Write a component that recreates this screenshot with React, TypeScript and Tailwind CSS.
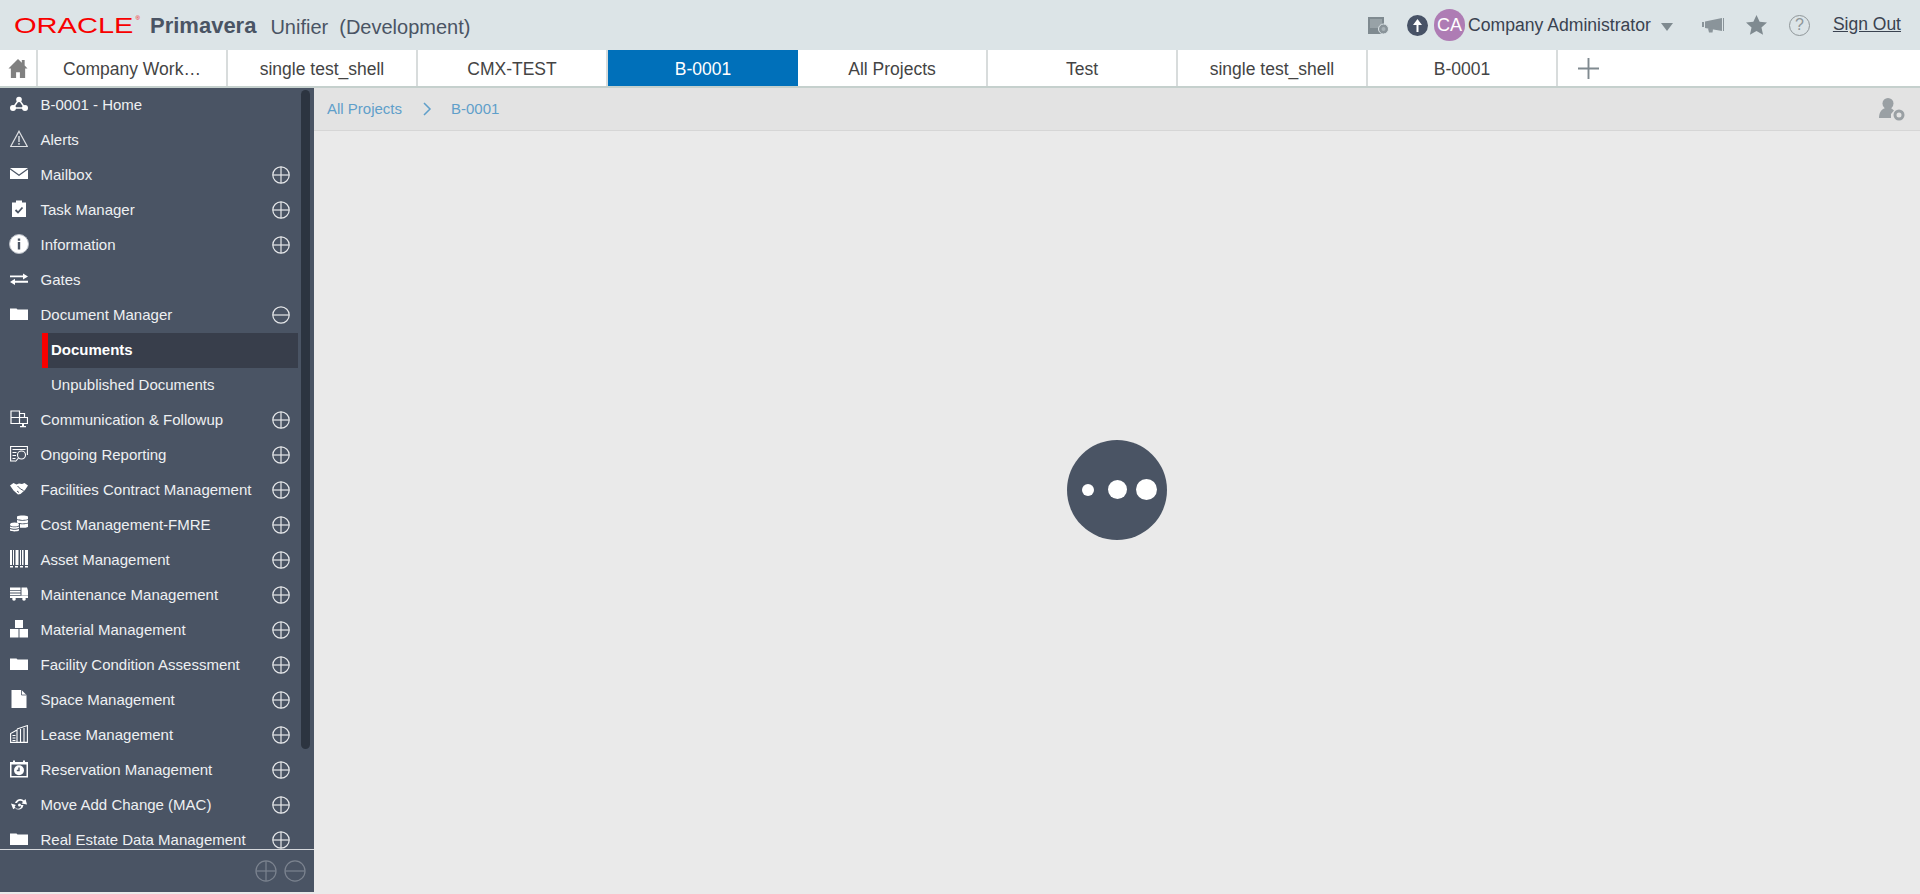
import type { ReactNode } from 'react';

const tabs = ['Company Work…', 'single test_shell', 'CMX-TEST', 'B-0001', 'All Projects', 'Test', 'single test_shell', 'B-0001'];

function Ico({ children, w = 18, h = 18 }: { children: ReactNode; w?: number; h?: number }) {
  return (
    <svg width={w} height={h} viewBox="0 0 18 18" fill="#fff">
      {children}
    </svg>
  );
}

const FolderIcon = (
  <Ico>
    <path d="M0 3.500h6.500l1 1H18V15H0z" />
  </Ico>
);

const icons: Record<string, ReactNode> = {
  home: (
    <Ico>
      <circle cx="9" cy="4.500" r="2.800" />
      <circle cx="3" cy="13" r="3" />
      <circle cx="15" cy="13" r="3" />
      <path d="M9 4.500 3 13h12z" fill="none" stroke="#fff" strokeWidth="1.500" />
    </Ico>
  ),
  alert: (
    <Ico>
      <path d="M9 1.200 17.300 16.500H.7z" fill="none" stroke="#dfe1e4" strokeWidth="1.200" />
      <path d="M8.300 6h1.400v6H8.300zM8.300 13h1.400v1.800H8.300z" fill="#dfe1e4" />
    </Ico>
  ),
  mail: (
    <Ico>
      <path d="M0 3h18L9 9.500z" />
      <path d="M0 4.500V14h18V4.500L9 11z" />
    </Ico>
  ),
  task: (
    <Ico>
      <path d="M2 2.500h4V.5h6v2h4V17H2z" />
      <path d="m5.500 10 2.500 2.500 4.500-5" fill="none" stroke="#4a5464" strokeWidth="1.800" />
    </Ico>
  ),
  info: (
    <svg width="20" height="20" viewBox="0 0 20 20">
      <circle cx="10" cy="10" r="9.500" fill="#fff" stroke="#b8bdc5" />
      <path d="M8.800 4.500h2.400v2.200H8.800zM8.800 8h2.400v7.500H8.800z" fill="#4a5464" />
    </svg>
  ),
  gates: (
    <Ico>
      <path d="M0 5.500h13V3.500L18 6.500l-5 3V7.300H0zM18 10.700H5V8.800L0 12l5 3v-2.300h13z" />
    </Ico>
  ),
  folder: FolderIcon,
  comm: (
    <Ico>
      <g fill="none" stroke="#fff" strokeWidth="1.200">
        <path d="M1 1h8.500v6.500H1zM9.500 7.500h8v6h-8zM1 7.500v6h8.500M9.500 3.500h5v4" />
      </g>
      <path d="M12 14h2v2h2v1.200h-6V16h2z" />
    </Ico>
  ),
  report: (
    <Ico>
      <g fill="none" stroke="#fff" strokeWidth="1.100">
        <path d="M17.400 10V1.500H.6V16h5" />
        <circle cx="11.500" cy="10" r="4" />
        <path d="m8.500 13-3 3.500" />
      </g>
      <path d="M2.500 4h13v1h-13zM2.500 7h4v1h-4zM2.500 10h3.500v1H2.500zM2.500 13h3v1h-3z" />
    </Ico>
  ),
  hands: (
    <Ico>
      <path d="M0 5.500 3.500 3l3 1.500L9 3.500l3 .5L14.500 3 18 5.500 15 10l-4.500 4-2.500.5-4.500-4z" />
      <path d="m7.500 6 3 3 3 1.500M7 11l2 1.500" fill="none" stroke="#4a5464" strokeWidth="1" />
    </Ico>
  ),
  cost: (
    <Ico>
      <path d="M7 1.500C9 .2 16 .2 18 1.500V4c-2 1.200-9 1.200-11 0zM7 5c2 1 9 1 11 0v2.500c-2 1.200-9 1.200-11 0zM10 9c2 .5 6 .3 8-.5V12c-1.500.8-5 1-8 .7z" />
      <ellipse cx="4.500" cy="9.500" rx="4.500" ry="2" />
      <path d="M0 11.500c2 1 7 1 9 0V13c-2 1-7 1-9 0zM0 14c2 1 7 1 9 0v1.500c-2 1.200-7 1.200-9 0z" />
    </Ico>
  ),
  asset: (
    <Ico>
      <path d="M0 0h2v15H0zM3 0h1v15H3zM5.500 0h3v15h-3zM10 0h1v15h-1zM12 0h1.500v15H12zM15 0h3v15h-3z" />
      <path d="M0 16h3v1.500H0zM5 16h3v1.500H5zM10 16h3v1.500h-3zM15 16h3v1.500h-3z" />
    </Ico>
  ),
  truck: (
    <Ico>
      <path d="M0 2.500h10.500V5H0zM0 5.800h10.500v1.800H0zM0 8.400h10.500V10H0zM0 10.800h18V13H0z" />
      <path d="M11.500 2.500H17l1 3v5h-6.500z" />
      <circle cx="4" cy="14" r="1.800" />
      <circle cx="14" cy="14" r="1.800" />
    </Ico>
  ),
  material: (
    <Ico>
      <path d="M5 0h8v8H5zM0 9h8.500v8.500H0zM9.500 9H18v8.500H9.500z" />
    </Ico>
  ),
  page: (
    <Ico>
      <path d="M1.500 0h10l5 5v13h-15z" />
      <path d="M11.500 0v5h5" fill="none" stroke="#4a5464" strokeWidth=".8" />
    </Ico>
  ),
  lease: (
    <Ico>
      <g fill="none" stroke="#fff" strokeWidth="1.100">
        <path d="M.6 17.400V8.500L7 5v12.400zM7 4 17.400.6v16.800H7" />
        <path d="M2.500 10.500h3M2.500 13h3M2.500 15.500h3M10.500 4v13.400M14 3v14.400" />
      </g>
    </Ico>
  ),
  reserve: (
    <Ico>
      <path d="M3 .5h2V2h8V.5h2V2h3v15.500H0V2h3zM1.500 4.500V16h15V4.500z" />
      <circle cx="9" cy="10.200" r="5" />
      <path d="M9 7.500v3H6.800" fill="none" stroke="#4a5464" strokeWidth="1.400" />
    </Ico>
  ),
  move: (
    <Ico>
      <path d="M5 8a5.500 5.500 0 0 1 9-2.500L15.500 4l1.500 5.500-5.500-1 1.500-1.500A3.500 3.500 0 0 0 7 8z" />
      <path d="M13.500 10a5 5 0 0 1-8.500 3l-1.800 1.200L1 8.500l5 1.500-1.300 1.200A3.200 3.200 0 0 0 11 10z" />
      <circle cx="9.500" cy="10" r="1.500" />
    </Ico>
  ),
};

const menu: { label: string; icon: string; toggle?: 'plus' | 'minus' }[] = [
  { label: 'B-0001 - Home', icon: 'home' },
  { label: 'Alerts', icon: 'alert' },
  { label: 'Mailbox', icon: 'mail', toggle: 'plus' },
  { label: 'Task Manager', icon: 'task', toggle: 'plus' },
  { label: 'Information', icon: 'info', toggle: 'plus' },
  { label: 'Gates', icon: 'gates' },
  { label: 'Document Manager', icon: 'folder', toggle: 'minus' },
];

const menu2: { label: string; icon: string }[] = [
  { label: 'Communication & Followup', icon: 'comm' },
  { label: 'Ongoing Reporting', icon: 'report' },
  { label: 'Facilities Contract Management', icon: 'hands' },
  { label: 'Cost Management-FMRE', icon: 'cost' },
  { label: 'Asset Management', icon: 'asset' },
  { label: 'Maintenance Management', icon: 'truck' },
  { label: 'Material Management', icon: 'material' },
  { label: 'Facility Condition Assessment', icon: 'folder' },
  { label: 'Space Management', icon: 'page' },
  { label: 'Lease Management', icon: 'lease' },
  { label: 'Reservation Management', icon: 'reserve' },
  { label: 'Move Add Change (MAC)', icon: 'move' },
  { label: 'Real Estate Data Management', icon: 'folder' },
];

function Toggle({ minus, dim }: { minus?: boolean; dim?: boolean }) {
  const color = dim ? '#7b838f' : '#e6e8ea';
  const size = dim ? 22 : 18;
  return (
    <svg width={size} height={size} viewBox="0 0 18 18" fill="none" stroke={color} strokeWidth={dim ? 1 : 1.2}>
      <circle cx="9" cy="9" r="8.200" />
      <path d="M.8 9h16.400" />
      {!minus && <path d="M9 .8v16.400" />}
    </svg>
  );
}

function MenuRow({ label, icon, toggle }: { label: string; icon: string; toggle?: 'plus' | 'minus' }) {
  return (
    <div className="flex h-[35px] shrink-0 items-center">
      <div className="flex w-[40.5px] shrink-0 justify-center pb-[3px] pr-[2px]">{icons[icon]}</div>
      <span className="flex-1 whitespace-nowrap text-[15px] text-[#eef0f2]">{label}</span>
      {toggle && (
        <div className="mr-[24px] flex w-[18px] justify-center pb-[1px]">
          <Toggle minus={toggle === 'minus'} />
        </div>
      )}
    </div>
  );
}

function Sidebar() {
  return (
    <aside className="mb-[2px] flex w-[314px] shrink-0 flex-col bg-[#4a5464]">
      <div className="relative min-h-0 flex-1 overflow-hidden">
        <div className="flex flex-col">
          {menu.map((m) => (
            <MenuRow key={m.label} {...m} />
          ))}
          <div className="ml-[42px] mr-[16px] flex h-[35px] shrink-0 items-center border-l-[6px] border-[#f80000] bg-[#383e4b] pl-[3px] text-[15px] font-bold text-white">
            Documents
          </div>
          <div className="flex h-[35px] shrink-0 items-center pl-[51px] text-[15px] text-[#eef0f2]">Unpublished Documents</div>
          {menu2.map((m) => (
            <MenuRow key={m.label} label={m.label} icon={m.icon} toggle="plus" />
          ))}
        </div>
        <div className="absolute left-[301px] top-[2px] h-[659px] w-[9px] rounded-[5px] bg-[#2c3440]" />
      </div>
      <div className="flex h-[43px] shrink-0 items-center justify-end gap-[7px] border-t border-[#d5d8dc] pr-[8px]">
        <Toggle dim />
        <Toggle dim minus />
      </div>
    </aside>
  );
}

export default function App() {
  return (
    <div className="flex h-screen flex-col overflow-hidden bg-[#eaeaea] font-['Liberation_Sans',Arial,sans-serif]">
      <header className="flex h-[50px] shrink-0 items-center bg-[#dce4e7]">
        <div className="ml-[14px] flex w-[136px] items-start pt-[1px]">
          <span className="origin-left scale-x-[1.32] text-[22px] leading-none text-[#f80000]">ORACLE</span>
          <span className="ml-[31px] text-[6px] leading-none text-[#f80000]">®</span>
        </div>
        <span className="pt-[1px] text-[22px] font-bold text-[#4a5464]">Primavera</span>
        <span className="ml-[14px] pt-[3px] text-[20px] text-[#4a5464]">Unifier</span>
        <span className="ml-[11px] pt-[3px] text-[20px] text-[#4a5464]">(Development)</span>
        <div className="ml-auto flex items-center">
          <svg width="21" height="17" viewBox="0 0 21 17" className="mr-[18px]">
            <path d="M0 0h16v17H0z" fill="#7f8a90" />
            <path d="M2 2h12v9H2z" fill="#98a2a7" />
            <circle cx="15.500" cy="12" r="5" fill="#8a949a" stroke="#dce4e7" />
            <circle cx="15.500" cy="12" r="2" fill="#a8b2b7" />
          </svg>
          <svg width="21" height="21" viewBox="0 0 21 21">
            <circle cx="10.500" cy="10.500" r="10.500" fill="#475266" />
            <path d="M10.500 4 15 10h-3.500v7h-2v-7H6z" fill="#fff" />
          </svg>
          <div className="ml-[6px] flex h-[32px] w-[31px] items-center justify-center rounded-full bg-[#ae7cb4] text-[18px] text-white">CA</div>
          <span className="ml-[3px] text-[17.6px] text-[#3a4250]">Company Administrator</span>
          <div className="ml-[10px] mt-[3px] h-0 w-0 border-x-[6px] border-t-[8px] border-x-transparent border-t-[#7f8a90]" />
          <svg width="22" height="15" viewBox="0 0 22 15" className="ml-[29px]" fill="#8a949a">
            <path d="M0 4h2v5H0zM3 3.500 20 0v13L3 10zM6 10.500l5 1-.5 3H7z" />
            <path d="M21 0h1v13h-1z" />
          </svg>
          <svg width="21" height="20" viewBox="0 0 22 21" className="ml-[22px]" fill="#7f8a90">
            <path d="m11 0 3.300 7.200 7.700.8-5.800 5.100 1.700 7.700L11 16.900l-6.900 3.900 1.700-7.700L0 8l7.700-.8z" />
          </svg>
          <div className="ml-[22px] flex h-[21px] w-[21px] items-center justify-center rounded-full border-[1.5px] border-[#8f9699] text-[16px] leading-none text-[#8f9699]">?</div>
          <a className="ml-[23px] mr-[19px] pb-[2px] text-[17.5px] text-[#3a4250] underline">Sign Out</a>
        </div>
      </header>
      <div className="flex h-[38px] shrink-0 border-b-2 border-[#c5d0cd] bg-white">
        <div className="flex w-[38px] items-center justify-center border-r-2 border-[#d8dcdc]">
          <svg width="20" height="20" viewBox="0 0 20 21" fill="#808080">
            <path d="M10 1 0 11h2.500v10H8v-6h4v6h5.500V11H20l-3-3V2h-3v3z" />
          </svg>
        </div>
        {tabs.map((t, i) => (
          <div
            key={i}
            className={
              i === 3
                ? 'flex w-[190px] items-center justify-center bg-[#0070ba] pt-[2px] text-[17.5px] text-white'
                : 'flex w-[190px] items-center justify-center border-r-2 border-[#d8dcdc] pt-[2px] text-[17.5px] text-[#444]'
            }
          >
            {t}
          </div>
        ))}
        <div className="flex w-[60px] items-center justify-center">
          <svg width="21" height="21" viewBox="0 0 22 22" fill="#808a90">
            <path d="M10 0h2v22h-2zM0 10h22v2H0z" />
          </svg>
        </div>
      </div>
      <div className="flex min-h-0 flex-1">
        <Sidebar />
        <main className="flex min-w-0 flex-1 flex-col">
          <div className="flex h-[43px] shrink-0 items-center border-b border-[#d6d6d6] bg-[#e3e3e3] pl-[13px] pr-[15px] text-[15px] text-[#5f9fca]">
            <span>All Projects</span>
            <svg width="10" height="14" viewBox="0 0 10 14" fill="none" stroke="#5f9fca" strokeWidth="1.500" className="ml-[20px] mr-[19px]">
              <path d="m2 1 6 6-6 6" />
            </svg>
            <span>B-0001</span>
            <svg width="26" height="23" viewBox="0 0 26 23" className="ml-auto" fill="#9aa0a4">
              <circle cx="9" cy="5.500" r="5.500" />
              <path d="M6 10h6l3 2.500-3 3.500v4H0c0-5 2-8.500 6-10z" />
              <circle cx="20" cy="17" r="4" fill="none" stroke="#9aa0a4" strokeWidth="3" />
            </svg>
          </div>
          <div className="flex flex-1 items-center justify-center pb-[46px]">
            <div className="flex h-[100px] w-[100px] items-center justify-center rounded-full bg-[#4a5464] pl-[4px]">
              <div className="h-[12px] w-[12px] rounded-full bg-white" />
              <div className="ml-[14px] h-[19px] w-[19px] rounded-full bg-white" />
              <div className="ml-[9px] h-[21px] w-[21px] rounded-full bg-white" />
            </div>
          </div>
        </main>
      </div>
    </div>
  );
}
